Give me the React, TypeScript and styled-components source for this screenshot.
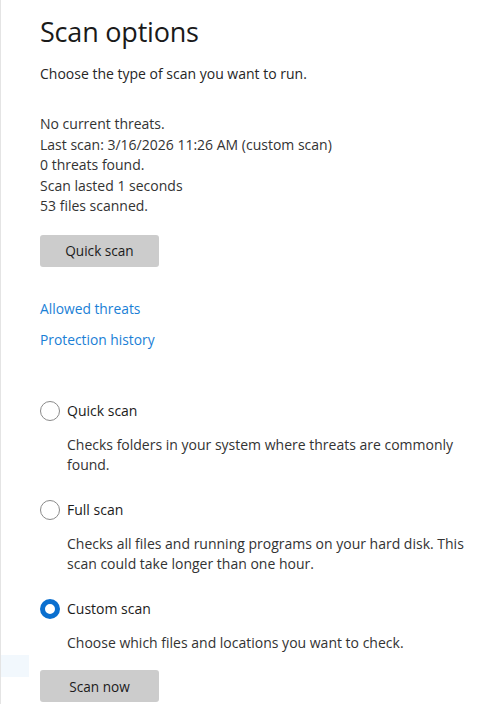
import React, { useState } from "react";
import styled, { createGlobalStyle } from "styled-components";

const Global = createGlobalStyle`
  html, body { margin: 0; padding: 0; background: #ffffff; }
  body { font-family: "Open Sans", "Noto Sans", sans-serif; -webkit-font-smoothing: antialiased; }
`;

const Page = styled.div`
  position: relative;
  box-sizing: border-box;
  width: 500px;
  height: 704px;
  overflow: hidden;
  border-left: 1px solid #e4e4e4;
  padding: 12px 0 0 39px;
  color: #1b1b1b;
`;

const HoverTrace = styled.div`
  position: absolute;
  left: 0;
  top: 655px;
  width: 28px;
  height: 22px;
  background: #f2f8fd;
`;

const Title = styled.h1`
  margin: 0;
  font-size: 27px;
  font-weight: 400;
  line-height: 40px;
  letter-spacing: -0.2px;
  color: #1a1a1a;
`;

const Subtitle = styled.p`
  margin: 12px 0 0;
  font-size: 14px;
  line-height: 20px;
  color: #262626;
`;

const Status = styled.div`
  margin-top: 30px;
  display: flex;
  flex-direction: column;
  font-size: 14px;
  line-height: 20.5px;
  color: #333333;
`;

const Button = styled.button<{ $mt: number }>`
  box-sizing: border-box;
  width: 119px;
  height: 32px;
  border: none;
  border-radius: 3px;
  background: #cccccc;
  color: #1b1b1b;
  font-family: inherit;
  font-size: 13.6px;
  padding: 0;
  cursor: pointer;
  margin-top: ${(p) => p.$mt}px;
  display: block;
`;

const Links = styled.div`
  margin-top: 32px;
  display: flex;
  flex-direction: column;
  gap: 11px;
`;

const Link = styled.a`
  font-size: 13.8px;
  line-height: 20px;
  color: #1a80d6;
  text-decoration: none;
  cursor: pointer;
`;

const Options = styled.div`
  margin-top: 51px;
  display: flex;
  flex-direction: column;
  gap: 24px;
`;

const Option = styled.div`
  display: flex;
  flex-direction: column;
`;

const RadioRow = styled.label`
  display: flex;
  align-items: center;
  gap: 7px;
  height: 20px;
  font-size: 14px;
  color: #1b1b1b;
  cursor: pointer;
`;

const Circle = styled.span<{ $on: boolean }>`
  box-sizing: border-box;
  width: 20px;
  height: 20px;
  border-radius: 50%;
  flex: none;
  border: ${(p) => (p.$on ? "5.5px solid #0a6fcf" : "1px solid #8a8a8a")};
  background: #ffffff;
`;

const Desc = styled.p`
  margin: 14px 0 0 27px;
  width: 410px;
  font-size: 14px;
  line-height: 20.5px;
  color: #333333;
`;

const options = [
  { id: "quick", label: "Quick scan", desc: "Checks folders in your system where threats are commonly found." },
  { id: "full", label: "Full scan", desc: "Checks all files and running programs on your hard disk. This scan could take longer than one hour." },
  { id: "custom", label: "Custom scan", desc: "Choose which files and locations you want to check." },
];

export default function App() {
  const [sel, setSel] = useState("custom");
  return (
    <Page>
      <Global />
      <HoverTrace />
      <Title>Scan options</Title>
      <Subtitle>Choose the type of scan you want to run.</Subtitle>
      <Status>
        <span>No current threats.</span>
        <span>Last scan: 3/16/2026 11:26 AM (custom scan)</span>
        <span>0 threats found.</span>
        <span>Scan lasted 1 seconds</span>
        <span>53 files scanned.</span>
      </Status>
      <Button $mt={18}>Quick scan</Button>
      <Links>
        <Link>Allowed threats</Link>
        <Link>Protection history</Link>
      </Links>
      <Options>
        {options.map((o) => (
          <Option key={o.id}>
            <RadioRow onClick={() => setSel(o.id)}>
              <Circle $on={sel === o.id} />
              {o.label}
            </RadioRow>
            <Desc>{o.desc}</Desc>
          </Option>
        ))}
      </Options>
      <Button $mt={17}>Scan now</Button>
    </Page>
  );
}
